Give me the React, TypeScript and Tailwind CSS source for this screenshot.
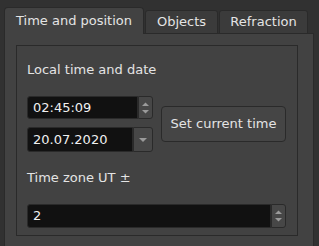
import React from "react";

const font = { fontFamily: '"DejaVu Sans", "Liberation Sans", sans-serif' };

function UpDown() {
  return (
    <svg width="9" height="14" viewBox="0 0 9 14">
      <path d="M1 5 L4.5 1.5 L8 5 Z" fill="#9a9a9a" />
      <path d="M1 9 L4.5 12.5 L8 9 Z" fill="#9a9a9a" />
    </svg>
  );
}

function Down() {
  return (
    <svg width="10" height="6" viewBox="0 0 10 6">
      <path d="M1 1 L5 5 L9 1 Z" fill="#9a9a9a" />
    </svg>
  );
}

export default function App() {
  return (
    <div
      className="w-[319px] h-[246px] bg-[#313131] overflow-hidden pl-[4px] pt-[7px] text-[13px] text-[#e4e4e4]"
      style={font}
    >
      <div className="flex items-end h-[27px] relative z-10">
        <div className="w-[140px] h-[27px] border border-b-0 border-[#2a2a2a] rounded-t-[4px] bg-[#424242] flex items-center justify-center pb-[1px]">
          Time and position
        </div>
        <div className="ml-[1px] w-[73px] h-[24px] border border-[#2a2a2a] rounded-t-[3px] bg-[#3b3b3b] flex items-center justify-center">
          Objects
        </div>
        <div className="ml-[1px] w-[89px] h-[24px] border border-[#2a2a2a] rounded-t-[3px] bg-[#3b3b3b] flex items-center justify-center">
          Refraction
        </div>
      </div>
      <div className="-mt-px w-[310px] h-[230px] border border-[#2a2a2a] bg-[#424242] pt-[11px] pl-[11px]">
        <div className="w-[282px] h-[191px] border border-[#2a2a2a] pl-[10px] pt-[16px]">
          <div className="h-[16px] leading-[16px]">Local time and date</div>
          <div className="flex items-center mt-[18px]">
            <div className="flex flex-col gap-[8px]">
              <div className="flex w-[126px] h-[23px]">
                <div className="flex-1 bg-[#111111] border border-[#2a2a2a] rounded-l-[3px] flex items-center pl-[5px] text-[#f0f0f0]">
                  02:45:09
                </div>
                <div className="w-[15px] bg-[#474747] border border-[#2a2a2a] rounded-r-[3px] flex items-center justify-center">
                  <UpDown />
                </div>
              </div>
              <div className="flex w-[126px] h-[25px]">
                <div className="flex-1 bg-[#111111] border border-[#2a2a2a] rounded-l-[3px] flex items-center pl-[5px] text-[#f0f0f0]">
                  20.07.2020
                </div>
                <div className="w-[20px] bg-[#474747] border border-[#2a2a2a] rounded-r-[3px] flex items-center justify-center">
                  <Down />
                </div>
              </div>
            </div>
            <div className="ml-[8px] w-[125px] h-[36px] bg-[#454545] border border-[#2a2a2a] rounded-[4px] flex items-center justify-center">
              Set current time
            </div>
          </div>
          <div className="mt-[18px] h-[16px] leading-[16px]">Time zone UT ±</div>
          <div className="flex w-[259px] h-[24px] mt-[18px]">
            <div className="flex-1 bg-[#111111] border border-[#2a2a2a] rounded-l-[3px] flex items-center pl-[5px] text-[#f0f0f0]">
              2
            </div>
            <div className="w-[15px] bg-[#474747] border border-[#2a2a2a] rounded-r-[3px] flex items-center justify-center">
              <UpDown />
            </div>
          </div>
        </div>
      </div>
    </div>
  );
}
